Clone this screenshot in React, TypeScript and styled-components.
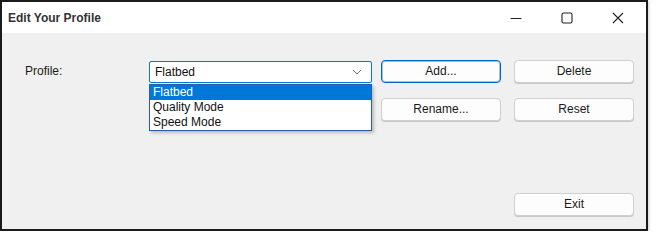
import React from "react";
import styled, { createGlobalStyle } from "styled-components";

const Global = createGlobalStyle`
  html, body { margin: 0; padding: 0; background: #ffffff; }
  body { font-family: "Liberation Sans", Arial, sans-serif; }
  * { box-sizing: border-box; }
`;

const Window = styled.div`
  width: 648px;
  height: 231px;
  border: 2px solid #1b1b1b;
  background: #f0f0f0;
  display: flex;
  flex-direction: column;
  box-shadow: 1px 1px 3px rgba(0, 0, 0, 0.18);
`;

const TitleBar = styled.div`
  height: 31px;
  background: #ffffff;
  display: flex;
  align-items: center;
  padding-left: 6px;
  padding-right: 3px;
`;

const Title = styled.div`
  flex: 1;
  font-size: 12px;
  font-weight: bold;
  color: #333333;
  padding-top: 1px;
`;

const CaptionButton = styled.div`
  width: 51px;
  height: 31px;
  display: flex;
  align-items: center;
  justify-content: center;
`;

const Content = styled.div`
  flex: 1;
  display: flex;
  flex-direction: column;
  padding: 27px 12px 0 21px;
`;

const Grid = styled.div`
  display: grid;
  grid-template-columns: 126px 223px 129px 133px;
  grid-template-rows: 23px 23px;
  row-gap: 15px;
`;

const Label = styled.div`
  font-size: 12px;
  color: #1a1a1a;
  display: flex;
  align-items: center;
  padding-left: 2px;
  padding-bottom: 1px;
`;

const ComboWrap = styled.div`
  position: relative;
  padding-top: 1px;
`;

const Combo = styled.div`
  height: 22px;
  background: #ffffff;
  border: 1px solid #0078d7;
  border-radius: 2px;
  display: flex;
  align-items: center;
  justify-content: space-between;
  padding: 0 9px 0 5px;
  font-size: 12px;
  color: #111;
`;

const List = styled.div`
  position: absolute;
  left: 0;
  top: calc(100% + 1px);
  width: 223px;
  background: #ffffff;
  border: 1px solid #2a5ea8;
  box-shadow: 2px 2px 3px rgba(0, 0, 0, 0.22);
  z-index: 2;
`;

const Item = styled.div<{ $selected?: boolean }>`
  height: 15px;
  line-height: 15px;
  padding-left: 3px;
  font-size: 12px;
  color: ${(p) => (p.$selected ? "#ffffff" : "#111111")};
  background: ${(p) => (p.$selected ? "#0078d7" : "transparent")};
`;

const Button = styled.button<{ $primary?: boolean }>`
  width: 120px;
  height: 23px;
  background: #fdfdfd;
  border: 1px solid ${(p) => (p.$primary ? "#0067c0" : "#d0d0d0")};
  box-shadow: ${(p) => (p.$primary ? "inset 0 0 0 1px #9cc3ea" : "0 1px 0 #c8c8c8")};
  border-radius: 4px;
  font-family: "Liberation Sans", Arial, sans-serif;
  font-size: 12px;
  color: #1a1a1a;
  padding: 0 0 1px 0;
  display: flex;
  align-items: center;
  justify-content: center;
`;

const ButtonCell = styled.div`
  display: flex;
  justify-content: flex-end;
`;

const Footer = styled.div`
  display: flex;
  justify-content: flex-end;
  margin-top: 72px;
`;

const Chevron = () => (
  <svg width="10" height="6" viewBox="0 0 10 6" fill="none">
    <path d="M1 1 L5 5 L9 1" stroke="#6b6b6b" strokeWidth="1" />
  </svg>
);

const MinIcon = () => (
  <svg width="12" height="12" viewBox="0 0 12 12">
    <path d="M0.5 6.5 H11.5" stroke="#222" strokeWidth="1" />
  </svg>
);

const MaxIcon = () => (
  <svg width="12" height="12" viewBox="0 0 12 12" fill="none">
    <rect x="1" y="1" width="10" height="10" rx="1.5" stroke="#222" strokeWidth="1.1" />
  </svg>
);

const CloseIcon = () => (
  <svg width="12" height="12" viewBox="0 0 12 12" fill="none">
    <path d="M1 1 L11 11 M11 1 L1 11" stroke="#222" strokeWidth="1.1" />
  </svg>
);

export default function App() {
  return (
    <>
      <Global />
      <Window>
        <TitleBar>
          <Title>Edit Your Profile</Title>
          <CaptionButton><MinIcon /></CaptionButton>
          <CaptionButton><MaxIcon /></CaptionButton>
          <CaptionButton><CloseIcon /></CaptionButton>
        </TitleBar>
        <Content>
          <Grid>
            <Label>Profile:</Label>
            <ComboWrap>
              <Combo>
                <span>Flatbed</span>
                <Chevron />
              </Combo>
              <List>
                <Item $selected>Flatbed</Item>
                <Item>Quality Mode</Item>
                <Item>Speed Mode</Item>
              </List>
            </ComboWrap>
            <ButtonCell><Button $primary>Add...</Button></ButtonCell>
            <ButtonCell><Button>Delete</Button></ButtonCell>
            <div />
            <div />
            <ButtonCell><Button>Rename...</Button></ButtonCell>
            <ButtonCell><Button>Reset</Button></ButtonCell>
          </Grid>
          <Footer>
            <Button>Exit</Button>
          </Footer>
        </Content>
      </Window>
    </>
  );
}
